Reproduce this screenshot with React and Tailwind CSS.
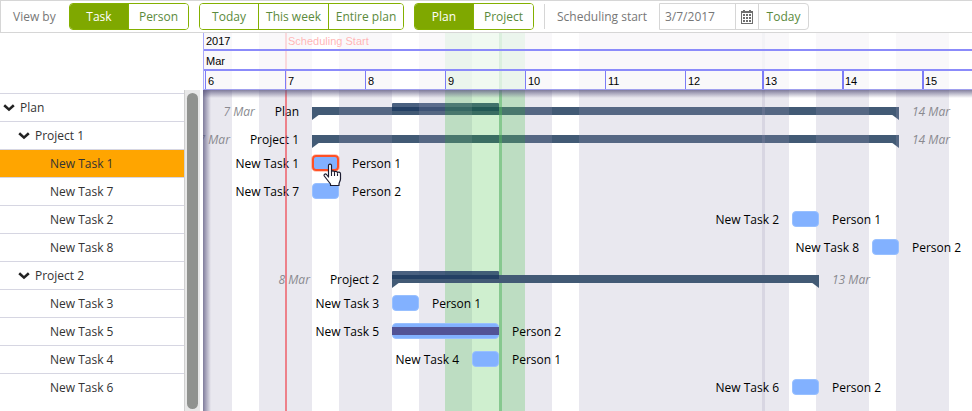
import { useState } from "react";
import { clsx } from "clsx";

const DAY = 80;
// Distance from the chart's left edge to midnight of 7 March.
const ORIGIN = 83;
const at = (day, hour = 0) => Math.floor(ORIGIN + (day - 7) * DAY + (hour * DAY) / 24);

const rows = [
  { name: "Plan", level: 0, start: at(7, 8), end: at(14, 16), from: "7 Mar", to: "14 Mar", done: 107, doneStart: 80, behind: true },
  { name: "Project 1", level: 1, start: at(7, 8), end: at(14, 16), from: "7 Mar", to: "14 Mar", behind: true },
  { name: "New Task 1", level: 2, start: at(7, 8), end: at(7, 16), person: "Person 1", selected: true },
  { name: "New Task 7", level: 2, start: at(7, 8), end: at(7, 16), person: "Person 2" },
  { name: "New Task 2", level: 2, start: at(13, 8), end: at(13, 16), person: "Person 1" },
  { name: "New Task 8", level: 2, start: at(14, 8), end: at(14, 16), person: "Person 2" },
  { name: "Project 2", level: 1, start: at(8, 8), end: at(13, 16), from: "8 Mar", to: "13 Mar", done: 107, doneStart: 0 },
  { name: "New Task 3", level: 2, start: at(8, 8), end: at(8, 16), person: "Person 1" },
  { name: "New Task 5", level: 2, start: at(8, 8), end: at(9, 16), person: "Person 2", progress: true },
  { name: "New Task 4", level: 2, start: at(9, 8), end: at(9, 16), person: "Person 1" },
  { name: "New Task 6", level: 2, start: at(13, 8), end: at(13, 16), person: "Person 2" },
];

const ticks = [
  { day: 6, x: 2 }, { day: 7, x: 82 }, { day: 8, x: 162 }, { day: 9, x: 242 }, { day: 10, x: 322 },
  { day: 11, x: 402 }, { day: 12, x: 482 }, { day: 13, x: 559 }, { day: 14, x: 639 }, { day: 15, x: 719 },
];

// Non-working time between shifts.
const bands = [[0, 29], [56, 109], [136, 189], [216, 269], [296, 349], [376, 586], [613, 666], [693, 746]];

function ButtonGroup({ label, items, initial }) {
  const [active, setActive] = useState(initial);
  return (
    <div role="group" aria-label={label} className="flex h-[27px] divide-x divide-[#84b000] overflow-hidden rounded-[4px] border border-[#84b000]">
      {items.map((item) => (
        <button
          key={item.text}
          type="button"
          onClick={() => initial && setActive(item.text)}
          className={clsx("pt-px text-center", item.width, active === item.text ? "bg-[#7fa800] text-white" : "bg-white text-[#5b8a3c]")}
        >
          {item.text}
        </button>
      ))}
    </div>
  );
}

function CalendarIcon() {
  return (
    <svg width="12" height="14" viewBox="0 0 12 14" aria-hidden="true">
      <path d="M0 1h12v13H0z" fill="#6e6e6e" />
      <path d="M2 0h2v2H2zM8 0h2v2H8z" fill="#6e6e6e" />
      <path d="M1 3h10v10H1z" fill="#fff" />
      <path d="M2 4h2v2H2zM5 4h2v2H5zM8 4h2v2H8zM2 7h2v2H2zM5 7h2v2H5zM8 7h2v2H8zM2 10h2v2H2zM5 10h2v2H5zM8 10h2v2H8z" fill="#6e6e6e" />
    </svg>
  );
}

function Chevron() {
  return (
    <svg width="12" height="8" viewBox="0 0 12 8" aria-hidden="true">
      <path d="M1.2 1.2 6 5.6l4.800-4.400" fill="none" stroke="#222" strokeWidth="2.600" />
    </svg>
  );
}

function Toolbar() {
  const [date, setDate] = useState("3/7/2017");
  return (
    <header className="flex h-[33px] shrink-0 items-center border-y border-l border-[#d6d6d6] text-[#777]">
      <span className="w-[68px] pt-px pl-3">View by</span>
      <div className="flex gap-[10px]">
        <ButtonGroup label="View by" initial="Task" items={[{ text: "Task", width: "w-[59px]" }, { text: "Person", width: "w-[59px]" }]} />
        <ButtonGroup
          label="Range"
          items={[{ text: "Today", width: "w-[59px]" }, { text: "This week", width: "w-[70px]" }, { text: "Entire plan", width: "w-[74px]" }]}
        />
        <ButtonGroup label="Scope" initial="Plan" items={[{ text: "Plan", width: "w-[59px]" }, { text: "Project", width: "w-[59px]" }]} />
      </div>
      <label htmlFor="start" className="ml-[10px] flex h-[25px] w-[115px] items-center border-l border-[#d6d6d6] pt-px pl-3">
        Scheduling start
      </label>
      <div className="flex h-[27px] divide-x divide-[#d6d6d6] rounded-r-[4px] border border-[#d6d6d6]">
        <input id="start" value={date} onChange={(e) => setDate(e.target.value)} className="w-[76px] pt-px pl-[5px] outline-none" />
        <button type="button" aria-label="Open calendar" className="flex w-[23px] items-center justify-center">
          <CalendarIcon />
        </button>
        <button type="button" onClick={() => setDate("3/7/2017")} className="w-[49px] pt-px text-[#5b8a3c]">
          Today
        </button>
      </div>
    </header>
  );
}

function Tree() {
  return (
    <aside className="flex w-[200px] shrink-0 flex-col text-[#333]">
      <div className="h-[57px] shrink-0" />
      <div className="flex min-h-0 flex-1">
        <ul className="flex-1 overflow-hidden pt-[3px]">
          {rows.map((row) => (
            <li
              key={row.name}
              className={clsx(
                "flex h-7 items-center border-t border-[#d6d6e2]",
                row.level === 0 && "pl-[3px]",
                row.level === 1 && "pl-[18px]",
                row.level === 2 && "pl-[50px]",
                row.selected && "bg-[#ffa500]",
              )}
            >
              {row.level < 2 ? (
                <button type="button" className="flex items-center gap-[5px]">
                  <Chevron />
                  {row.name}
                </button>
              ) : (
                row.name
              )}
            </li>
          ))}
        </ul>
        <div className="w-4 border-l border-[#d0d0d0] bg-[#e8e8e8] pt-[3px] pr-[2px] pb-[2px] pl-[2px]">
          <div className="h-full rounded-full bg-[#90928f]" />
        </div>
      </div>
    </aside>
  );
}

function HandCursor() {
  return (
    <svg width="19" height="24" viewBox="0 0 19 24" className="absolute top-[8px] left-[11px] z-30" aria-hidden="true">
      <path
        d="M5.500 14V2.500C5.500.6 8.500.6 8.500 2.500V9c0-1.600 3-1.400 3 .3 0-1.500 3-1.300 3 .6 0-1.300 3-1 3 .8V16c0 2-1.500 3.500-1.500 5v1.500H7.500V21L4 16.500 1.300 13C.5 11.500 2.300 10.300 3.500 11.500z"
        fill="#fff"
        stroke="#1c1c30"
        strokeWidth="1.200"
        strokeLinejoin="round"
      />
      <path d="M8.500 9v4M11.500 9.500V13M14.500 10.500V13" stroke="#1c1c30" strokeWidth="1.100" />
    </svg>
  );
}

function SummaryBar({ row }) {
  return (
    <div className={clsx("absolute inset-0", row.behind ? "z-0" : "z-20")}>
      <svg width="100%" height="14" className="absolute top-0 left-0" aria-hidden="true">
        <rect width="100%" height="8" fill="#425a75" />
        <path d="M0 7h8L0 13z" fill="#425a75" />
        <svg x="100%" overflow="visible">
          <path d="M0 7h-8L0 13z" fill="#425a75" />
        </svg>
      </svg>
      {row.done && (
        <div className="absolute -top-1 h-2 rounded-t-[1px] bg-[#1d3960]/80" style={{ left: row.doneStart, width: row.done }} />
      )}
    </div>
  );
}

function TaskBar({ row }) {
  return (
    <div
      className={clsx(
        "absolute inset-0 z-20 flex items-center rounded-[4px] bg-[#82b1ff]",
        row.selected ? "border-2 border-[#ff5126] outline-1 outline-[#ff5126]/30" : "border border-[#98c0ff]",
      )}
    >
      {row.progress && <div className="-mx-px h-2 flex-1 bg-[#525396]" />}
    </div>
  );
}

function ChartRow({ row }) {
  const task = row.level === 2;
  return (
    <div className={clsx("flex h-7 items-center", !task && "pt-2")}>
      <div className={clsx("relative shrink-0", task ? "h-4" : "h-2")} style={{ marginLeft: row.start, width: row.end - row.start }}>
        {task ? <TaskBar row={row} /> : <SummaryBar row={row} />}
        <div className="absolute inset-y-0 right-full z-20 mr-[13px] flex items-center gap-5 pt-[2px] whitespace-nowrap">
          {row.from && <span className="font-medium text-[#8a8a90] italic">{row.from}</span>}
          <span>{row.name}</span>
        </div>
        <div className="absolute inset-y-0 left-full z-20 ml-[13px] flex items-center pt-[2px] whitespace-nowrap">
          {task ? row.person : <span className="font-medium text-[#8a8a90] italic">{row.to}</span>}
        </div>
        {row.selected && <HandCursor />}
      </div>
    </div>
  );
}

function Timescale() {
  return (
    <div className="relative z-40 h-[57px] border-l border-[#a9a9fb] bg-white/70 font-['Liberation_Sans',Arial,sans-serif] text-[11px] leading-4">
      <div className="h-[18px] border-b-2 border-[#8b8bfa] pl-[2px]">2017</div>
      <div className="h-5 border-b-2 border-[#8b8bfa] pt-[2px] pl-[2px]">Mar</div>
      <div className="relative h-[19px] border-b border-[#a0a0ee]">
        {ticks.map((tick) => (
          <div
            key={tick.day}
            className={clsx("absolute top-0 -ml-px h-[18px] border-[#7c7cf8] pt-[2px]", tick.day > 12 ? "border-l-2 pl-px" : "border-l pl-[2px]")}
            style={{ left: tick.x }}
          >
            {tick.day}
          </div>
        ))}
      </div>
    </div>
  );
}

function Chart() {
  return (
    <main className="relative isolate ml-[3px] min-w-0 flex-1 overflow-hidden text-black">
      <div className="pointer-events-none absolute inset-0 z-10">
        {bands.map(([from, to]) => (
          <div key={from} className="absolute inset-y-0 bg-[rgb(156,151,180)]/22" style={{ left: from, width: to - from }} />
        ))}
        <div className="absolute inset-y-0 left-[242px] w-20 bg-[rgb(27,179,27)]/21" />
        <div className="absolute inset-y-0 left-[296px] w-[3px] bg-[#4fb35c]/50" />
        <div className="absolute inset-y-0 left-[559px] w-[3px] bg-[#9c97b4]/22" />
      </div>
      <div className="pointer-events-none absolute inset-y-0 left-[82px] z-30 border-l-2 border-[#ee5560]/70 font-['Liberation_Sans',Arial,sans-serif] text-[11px] leading-4 text-[#ff0000]">
        <span className="pl-px">Scheduling Start</span>
      </div>
      <Timescale />
      <div className="pt-[3px]">
        {rows.map((row) => (
          <ChartRow key={row.name} row={row} />
        ))}
      </div>
      <div className="pointer-events-none absolute inset-x-0 top-[57px] z-30 h-2 bg-linear-to-b from-[#5c5880]/75 to-transparent" />
      <div className="pointer-events-none absolute top-[57px] bottom-0 left-0 z-30 w-2 bg-linear-to-r from-[#5c5880]/75 to-transparent" />
    </main>
  );
}

export default function App() {
  return (
    <div className="flex h-screen flex-col overflow-hidden bg-white font-['Open_Sans',sans-serif] text-[12px] leading-4">
      <Toolbar />
      <div className="flex min-h-0 flex-1">
        <Tree />
        <Chart />
      </div>
    </div>
  );
}
